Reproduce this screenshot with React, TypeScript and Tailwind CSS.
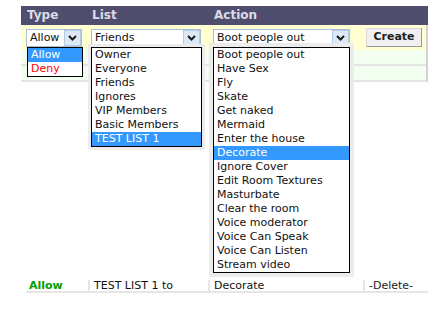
import React from 'react';

const typeOptions = ['Allow', 'Deny'];
const listOptions = ['Owner', 'Everyone', 'Friends', 'Ignores', 'VIP Members', 'Basic Members', 'TEST LIST 1'];
const actionOptions = [
  'Boot people out',
  'Have Sex',
  'Fly',
  'Skate',
  'Get naked',
  'Mermaid',
  'Enter the house',
  'Decorate',
  'Ignore Cover',
  'Edit Room Textures',
  'Masturbate',
  'Clear the room',
  'Voice moderator',
  'Voice Can Speak',
  'Voice Can Listen',
  'Stream video',
];

const Chevron = () => (
  <svg width="9" height="6" viewBox="0 0 9 6">
    <path d="M1 1 L4.5 4.5 L8 1" fill="none" stroke="#1a1a1a" strokeWidth="2" />
  </svg>
);

interface SelectBoxProps {
  value: string;
  width: string;
}

const SelectBox: React.FC<SelectBoxProps> = ({ value, width }) => (
  <div className={`flex h-[18px] items-stretch border border-[#a9bfd6] bg-white ${width}`}>
    <span className="flex-1 pl-[3px] leading-[16px] text-[#111]">{value}</span>
    <span className="flex w-[17px] items-center justify-center border border-[#b4cbe8] bg-[#dde8f6]">
      <Chevron />
    </span>
  </div>
);

interface DropListProps {
  items: string[];
  selected: string;
  className: string;
  colors?: Record<string, string>;
}

const DropList: React.FC<DropListProps> = ({ items, selected, className, colors = {} }) => (
  <div className={`absolute border border-black bg-white ${className}`}>
    {items.map((item) => (
      <div
        key={item}
        className={`h-[14px] pl-[3px] leading-[14px] ${
          item === selected ? 'bg-[#3399ff] text-white' : colors[item] ?? 'text-[#111]'
        }`}
      >
        {item}
      </div>
    ))}
  </div>
);

export default function App() {
  return (
    <div
      className="relative h-[316px] w-[438px] overflow-hidden bg-white text-[11px]"
      style={{ fontFamily: '"DejaVu Sans", Verdana, sans-serif' }}
    >
      <div className="ml-[21px] mt-[6px] w-[407px]">
        {/* header */}
        <div className="grid h-[19px] grid-cols-[67px_120px_155px_65px] bg-[#4f4e6e] text-[12px] font-bold leading-[19px] text-[#dcdce6]">
          <span className="pl-[6px]">Type</span>
          <span className="pl-[4px]">List</span>
          <span className="pl-[6px]">Action</span>
          <span />
        </div>

        {/* form row */}
        <div className="grid h-[25px] grid-cols-[67px_120px_155px_65px] border-r-2 border-[#d4d4d4] bg-[#ffffd2] pt-[4px]">
          <div className="pl-[5px]">
            <SelectBox value="Allow" width="w-[56px]" />
          </div>
          <div className="pl-[3px]">
            <SelectBox value="Friends" width="w-[110px]" />
          </div>
          <div className="pl-[5px]">
            <SelectBox value="Boot people out" width="w-[137px]" />
          </div>
          <div className="pl-[3px]">
            <button className="-mt-[1px] h-[19px] w-[56px] border border-[#9a9a9a] border-l-[#d8d8d8] border-t-[#d8d8d8] bg-[#f0f0f0] font-bold text-[#222]">
              Create
            </button>
          </div>
        </div>

        {/* existing rows (behind menus) */}
        <div className="border-r-2 border-[#d4d4d4]">
          <div className="h-[16px] border-b-2 border-[#e4e4e4] bg-[#f2fff0]" />
          <div className="h-[16px] border-b-2 border-[#e4e4e4] bg-[#f2fff0]" />
        </div>

        <div className="h-[198px]" />

        {/* saved permission */}
        <div className="ml-[5px] grid h-[13px] grid-cols-[62px_120px_155px_65px] border-b-2 border-[#e6e6e6] leading-[12px]">
          <span className="pl-[3px] font-bold text-[#00a000]">Allow</span>
          <span className="border-l-2 border-[#e6e6e6] pl-[4px] text-[#111]">TEST LIST 1 to</span>
          <span className="border-l-2 border-[#e6e6e6] pl-[4px] text-[#111]">Decorate</span>
          <span className="border-l-2 border-[#e6e6e6] pl-[4px] text-[#222]">-Delete-</span>
        </div>
      </div>

      {/* open menus */}
      <DropList
        items={typeOptions}
        selected="Allow"
        className="left-[27px] top-[47px] w-[56px]"
        colors={{ Deny: 'text-[#ff0000]' }}
      />
      <DropList
        items={listOptions}
        selected="TEST LIST 1"
        className="left-[91px] top-[47px] w-[111px] shadow-[0_0_0_3px_#ececec]"
      />
      <DropList
        items={actionOptions}
        selected="Decorate"
        className="left-[213px] top-[47px] w-[137px] shadow-[0_0_0_4px_#ececec]"
      />
    </div>
  );
}
